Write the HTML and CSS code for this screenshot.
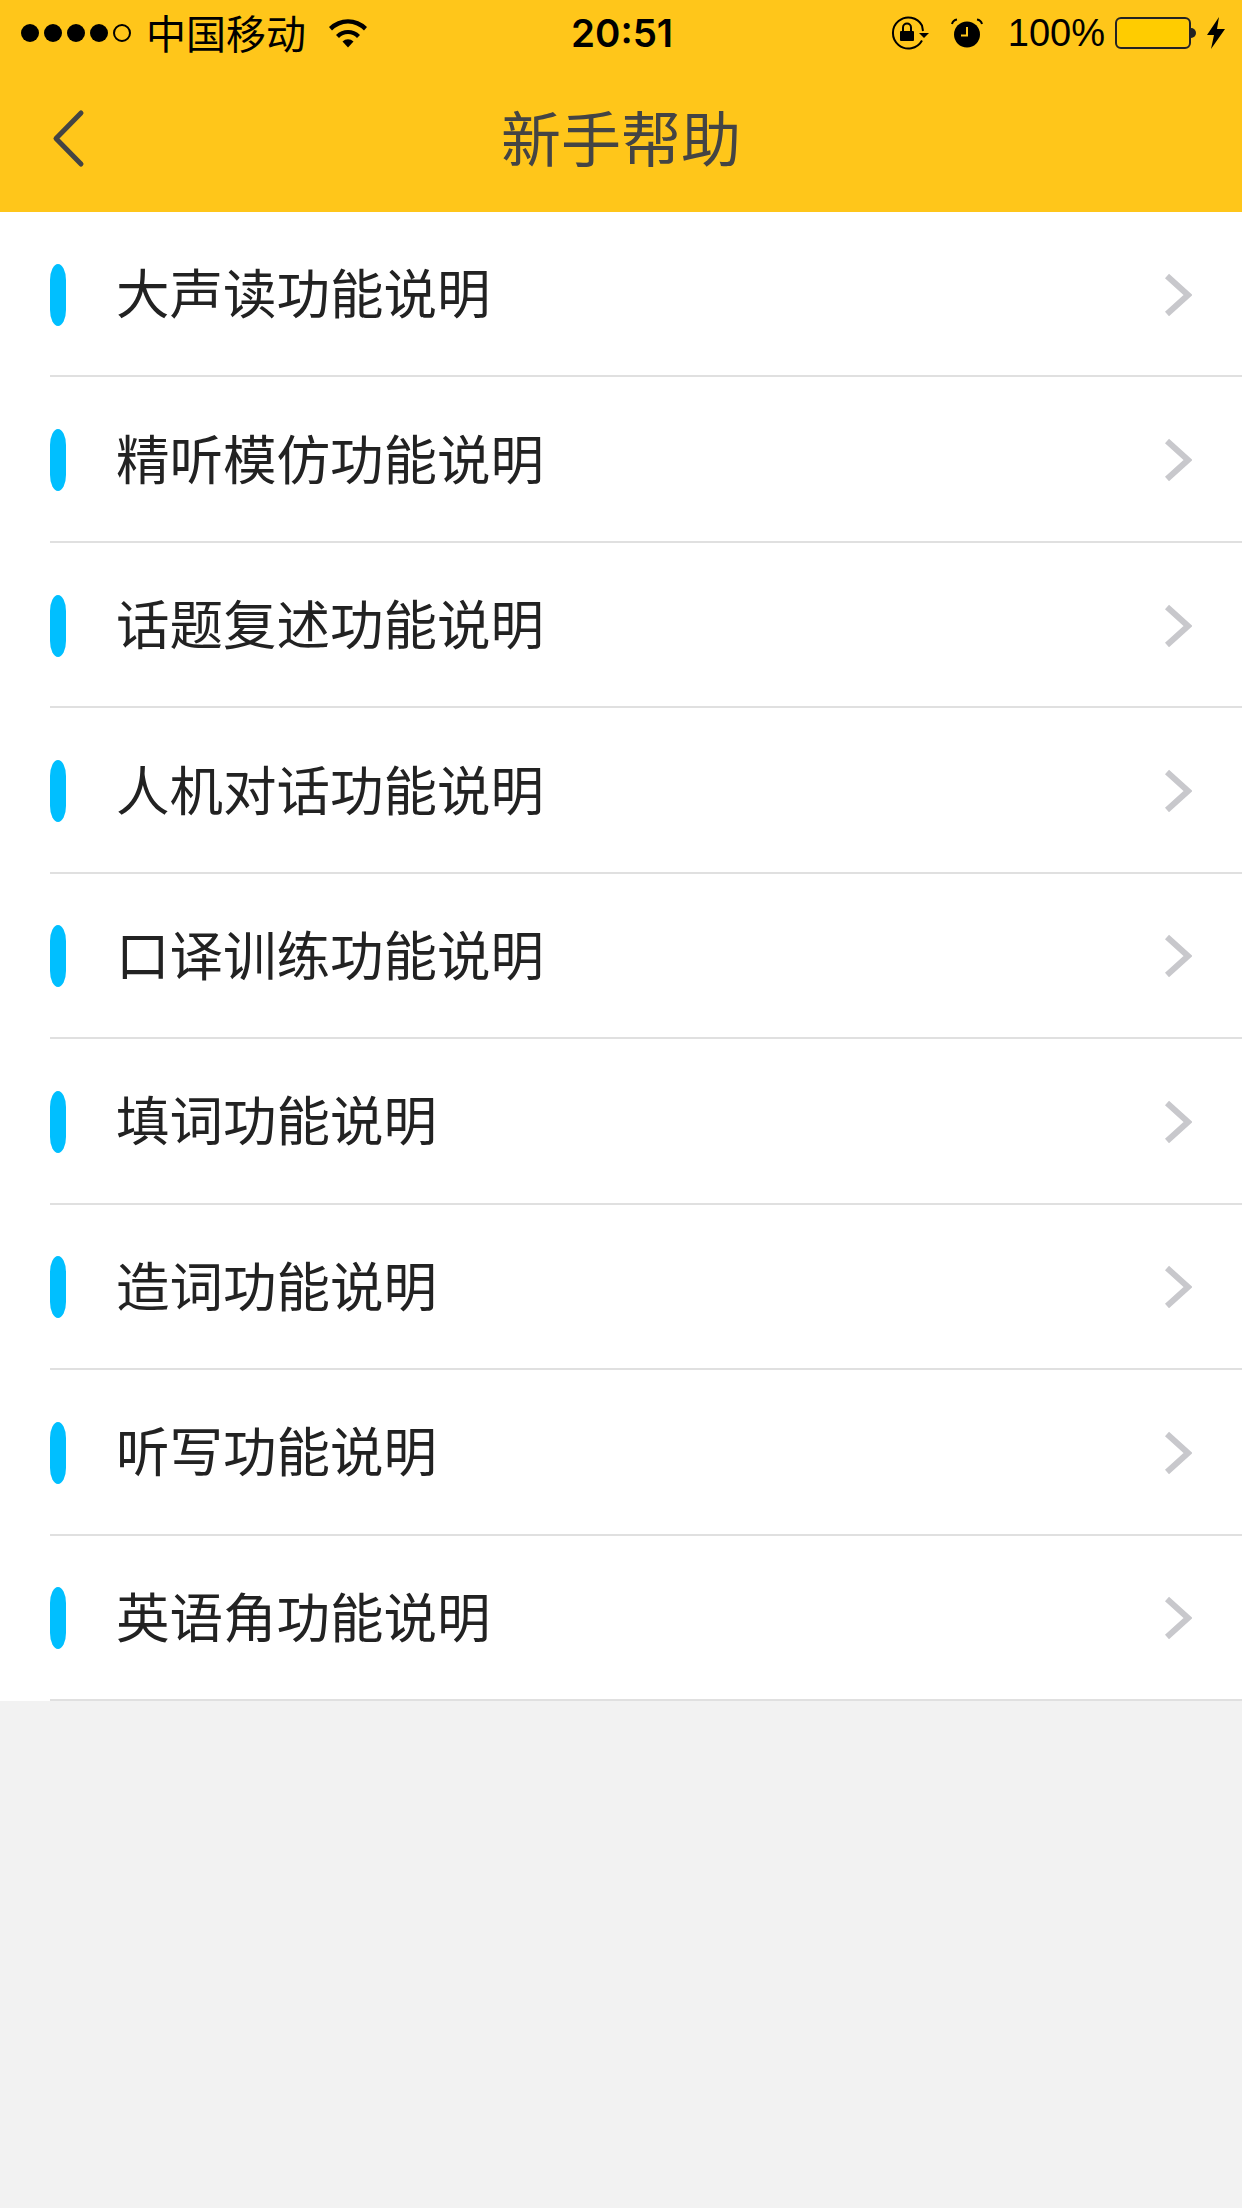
FILE: index.html
```html
<!DOCTYPE html>
<html lang="zh-CN">
<head>
    <meta charset="UTF-8">
    <meta name="viewport" content="width=device-width, initial-scale=1.0">
    <title>新手帮助</title>
    <link rel="stylesheet" href="styles.css">
</head>
<body>

    <header class="top">
        <div class="status">
            <div class="status-left">
                <div class="signal">
                    <span class="dot"></span><span class="dot"></span><span class="dot"></span><span class="dot"></span><span class="dot empty"></span>
                </div>
                <span class="carrier">中国移动</span>
                <svg class="wifi" width="40" height="30" viewBox="0 0 40 30">
                    <path d="M1 9 A27 27 0 0 1 39 9 L36 12.500 A22 22 0 0 0 4 12.500 Z" fill="#000"/>
                    <path d="M8 17 A17 17 0 0 1 32 17 L29 20 A12 12 0 0 0 11 20 Z" fill="#000"/>
                    <path d="M14.500 23.500 A8 8 0 0 1 25.500 23.500 L20 29.500 Z" fill="#000"/>
                </svg>
            </div>
            <span class="time">20:51</span>
            <div class="status-right">
                <svg class="rotate-lock" width="40" height="34" viewBox="0 0 40 34">
                    <path d="M32 24.500 A15.500 15.500 0 1 1 32 9.500 L33 15" fill="none" stroke="#000" stroke-width="2"/>
                    <path d="M29 17 H39 L34 22 Z" fill="#000"/>
                    <rect x="10" y="15" width="14" height="10" rx="1" fill="#000"/>
                    <path d="M13 15 V11.500 A4 4 0 0 1 21 11.500 V15" fill="none" stroke="#000" stroke-width="2"/>
                </svg>
                <svg class="alarm" width="32" height="30" viewBox="0 0 32 30">
                    <circle cx="16" cy="16.500" r="13" fill="#000"/>
                    <path d="M16 9 V17.500 H10" fill="none" stroke="#ffc61a" stroke-width="2"/>
                    <path d="M1 6 A6 6 0 0 1 6 1.500 M31 6 A6 6 0 0 0 26 1.500" fill="none" stroke="#000" stroke-width="2"/>
                </svg>
                <span class="percent">100%</span>
                <div class="battery">
                    <div class="battery-body"><div class="battery-fill"></div></div>
                    <span class="battery-nub"></span>
                </div>
                <svg class="bolt" width="20" height="32" viewBox="0 0 20 32">
                    <path d="M13 0 L1 18 H8 L5 32 L19 12 H11 Z" fill="#000"/>
                </svg>
            </div>
        </div>
        <div class="nav">
            <svg class="back" width="36" height="60" viewBox="0 0 36 60">
                <path d="M31 4 L6 29.500 L31 55" fill="none" stroke="#444" stroke-width="5" stroke-linecap="round" stroke-linejoin="round"/>
            </svg>
            <h1>新手帮助</h1>
        </div>
    </header>

    <ul class="list">
        <li class="row"><span class="pill"></span><span class="label">大声读功能说明</span><svg class="arrow" width="28" height="44" viewBox="0 0 28 44"><path d="M3 3 L24 22 L3 41" fill="none" stroke="#c8c8cc" stroke-width="6"/></svg></li>
        <li class="row"><span class="pill"></span><span class="label">精听模仿功能说明</span><svg class="arrow" width="28" height="44" viewBox="0 0 28 44"><path d="M3 3 L24 22 L3 41" fill="none" stroke="#c8c8cc" stroke-width="6"/></svg></li>
        <li class="row"><span class="pill"></span><span class="label">话题复述功能说明</span><svg class="arrow" width="28" height="44" viewBox="0 0 28 44"><path d="M3 3 L24 22 L3 41" fill="none" stroke="#c8c8cc" stroke-width="6"/></svg></li>
        <li class="row"><span class="pill"></span><span class="label">人机对话功能说明</span><svg class="arrow" width="28" height="44" viewBox="0 0 28 44"><path d="M3 3 L24 22 L3 41" fill="none" stroke="#c8c8cc" stroke-width="6"/></svg></li>
        <li class="row"><span class="pill"></span><span class="label">口译训练功能说明</span><svg class="arrow" width="28" height="44" viewBox="0 0 28 44"><path d="M3 3 L24 22 L3 41" fill="none" stroke="#c8c8cc" stroke-width="6"/></svg></li>
        <li class="row"><span class="pill"></span><span class="label">填词功能说明</span><svg class="arrow" width="28" height="44" viewBox="0 0 28 44"><path d="M3 3 L24 22 L3 41" fill="none" stroke="#c8c8cc" stroke-width="6"/></svg></li>
        <li class="row"><span class="pill"></span><span class="label">造词功能说明</span><svg class="arrow" width="28" height="44" viewBox="0 0 28 44"><path d="M3 3 L24 22 L3 41" fill="none" stroke="#c8c8cc" stroke-width="6"/></svg></li>
        <li class="row"><span class="pill"></span><span class="label">听写功能说明</span><svg class="arrow" width="28" height="44" viewBox="0 0 28 44"><path d="M3 3 L24 22 L3 41" fill="none" stroke="#c8c8cc" stroke-width="6"/></svg></li>
        <li class="row"><span class="pill"></span><span class="label">英语角功能说明</span><svg class="arrow" width="28" height="44" viewBox="0 0 28 44"><path d="M3 3 L24 22 L3 41" fill="none" stroke="#c8c8cc" stroke-width="6"/></svg></li>
    </ul>

</body>
</html>
```
FILE: styles.css
```css
body {
    font-family: "Liberation Sans", "Noto Sans CJK SC", sans-serif;
    background-color: #f2f2f2;
    margin: 0;
    height: 2208px;
    overflow: hidden;
}
.top {
    background-color: #ffc61a;
    height: 212px;
}
.status {
    height: 66px;
    display: flex;
    align-items: center;
    justify-content: space-between;
    color: #000;
    position: relative;
}
.status-left {
    display: flex;
    align-items: center;
    padding-left: 21px;
}
.signal {
    display: flex;
    gap: 5px;
}
.dot {
    width: 18px;
    height: 18px;
    border-radius: 50%;
    background-color: #000;
    box-sizing: border-box;
}
.dot.empty {
    background-color: transparent;
    border: 2px solid #000;
}
.carrier {
    font-size: 40px;
    line-height: 64px;
    margin-left: 15px;
    margin-bottom: 2px;
    font-family: "Noto Sans CJK SC", sans-serif;
}
.wifi {
    margin-left: 22px;
}
.time {
    position: absolute;
    left: 571px;
    font-size: 38.500px;
    font-weight: 600;
    font-family: Inter, sans-serif;
}
.status-right {
    display: flex;
    align-items: center;
    padding-right: 16px;
}
.alarm {
    margin-left: 21px;
}
.percent {
    font-size: 38px;
    margin-left: 25px;
    padding-top: 1px;
}
.battery {
    display: flex;
    align-items: center;
    margin-left: 10px;
}
.battery-body {
    width: 76px;
    height: 32px;
    border: 2px solid #222;
    border-radius: 6px;
    box-sizing: border-box;
    padding: 1px;
}
.battery-fill {
    height: 100%;
    background-color: #ffcc00;
    border-radius: 3px;
}
.battery-nub {
    width: 5px;
    height: 10px;
    background-color: #222;
    border-radius: 0 5px 5px 0;
}
.bolt {
    margin-left: 10px;
}
.nav {
    height: 146px;
    position: relative;
    display: flex;
    align-items: center;
    justify-content: center;
    padding-bottom: 8px;
    box-sizing: border-box;
}
.nav h1 {
    margin: 0;
    font-size: 60px;
    font-weight: 400;
    color: #444;
    font-family: "Noto Sans CJK SC", sans-serif;
}
.back {
    position: absolute;
    left: 50px;
    top: 43px;
}
.list {
    list-style: none;
    margin: 0;
    padding: 0;
    background-color: #fff;
}
.row {
    height: 165.450px;
    box-sizing: border-box;
    display: flex;
    align-items: center;
    padding-left: 50px;
    padding-right: 50px;
    position: relative;
}
.row::after {
    content: "";
    position: absolute;
    left: 50px;
    right: 0;
    bottom: 0;
    height: 2px;
    background-color: #e0e0e0;
}
.pill {
    width: 16px;
    height: 62px;
    border-radius: 8px / 16px;
    background-color: #00bfff;
}
.label {
    margin-left: 50px;
    margin-bottom: 8px;
    font-size: 53.500px;
    color: #222;
    font-family: "Noto Sans CJK SC", sans-serif;
    flex: 1;
}
```
